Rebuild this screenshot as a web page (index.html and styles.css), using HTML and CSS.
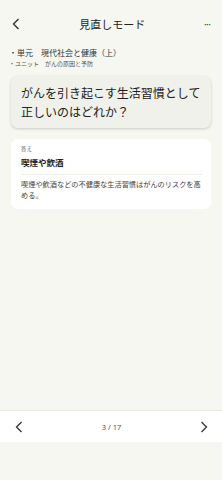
FILE: index.html
```html
<!DOCTYPE html>
<html lang="ja">
<head>
    <meta charset="UTF-8">
    <meta name="viewport" content="width=device-width, initial-scale=1.0">
    <title>見直しモード</title>
    <link rel="stylesheet" href="styles.css">
</head>
<body>

<div class="page">
    <!-- ヘッダー -->
    <div class="header">
        <svg class="icon-back" width="8" height="12" viewBox="0 0 8 12"><path d="M6.5 1 L1.5 6 L6.5 11" fill="none" stroke="#333" stroke-width="1.4"/></svg>
        <h1 class="title">見直しモード</h1>
        <span class="more">•••</span>
    </div>

    <div class="meta">
        <p class="meta-unit">・単元　現代社会と健康（上）</p>
        <p class="meta-sub">・ユニット　がんの原因と予防</p>
    </div>

    <!-- 問題 -->
    <div class="question-card">
        <p>がんを引き起こす生活習慣として正しいのはどれか？</p>
    </div>

    <!-- 答え -->
    <div class="answer-card">
        <p class="answer-label">答え</p>
        <p class="answer-text">喫煙や飲酒</p>
        <div class="divider"></div>
        <p class="answer-desc">喫煙や飲酒などの不健康な生活習慣はがんのリスクを高める。</p>
    </div>
</div>

<div class="footer">
    <svg width="8" height="12" viewBox="0 0 8 12"><path d="M6.5 1 L1.5 6 L6.5 11" fill="none" stroke="#333" stroke-width="1.3"/></svg>
    <span class="pager">3 / 17</span>
    <svg width="8" height="12" viewBox="0 0 8 12"><path d="M1.5 1 L6.5 6 L1.5 11" fill="none" stroke="#333" stroke-width="1.3"/></svg>
</div>

</body>
</html>
```

FILE: styles.css
```css
body {
    margin: 0;
    padding: 0;
    background-color: #f6f7f1;
    color: #222;
    font-family: "Noto Sans CJK JP", "Noto Sans", sans-serif;
    height: 480px;
    display: flex;
    flex-direction: column;
}
p {
    margin: 0;
}
.page {
    flex: 1;
    padding: 0 11px;
}
.header {
    height: 47px;
    display: flex;
    align-items: center;
    justify-content: space-between;
}
.icon-back {
    margin-left: 1px;
}
.title {
    margin: 0;
    font-size: 11px;
    font-weight: normal;
    color: #222;
}
.more {
    font-size: 5px;
    letter-spacing: 0.5px;
    color: #333;
    margin-right: 0;
}
.meta-unit {
    font-size: 8px;
    line-height: 12px;
    color: #333;
    margin-left: -2px;
}
.meta-sub {
    font-size: 6px;
    line-height: 10px;
    color: #555;
    margin-left: -2px;
}
.question-card {
    margin-top: 7px;
    background-color: #f0f1eb;
    border-radius: 7px;
    box-shadow: 0 1px 3px rgba(0, 0, 0, 0.18);
    padding: 7px 10px 7px 10px;
}
.question-card p {
    font-size: 12px;
    line-height: 19px;
    color: #222;
}
.answer-card {
    margin-top: 11px;
    background-color: #fff;
    border-radius: 7px;
    padding: 6px 9px 8px 10px;
}
.answer-label {
    font-size: 5.5px;
    line-height: 9px;
    color: #666;
}
.answer-text {
    font-size: 8.5px;
    font-weight: bold;
    line-height: 14px;
    margin-top: 1px;
}
.divider {
    height: 1px;
    background-color: #eceee8;
    margin: 5px 0 4px;
}
.answer-desc {
    font-size: 7.2px;
    line-height: 11px;
    color: #444;
}
.footer {
    height: 31px;
    margin-bottom: 38px;
    background-color: #fff;
    border-top: 1px solid #e6e7e2;
    display: flex;
    align-items: center;
    justify-content: space-between;
    padding: 0 14px 0 15px;
}
.pager {
    font-size: 7.5px;
    color: #555;
    font-family: "Noto Sans", sans-serif;
}
```
